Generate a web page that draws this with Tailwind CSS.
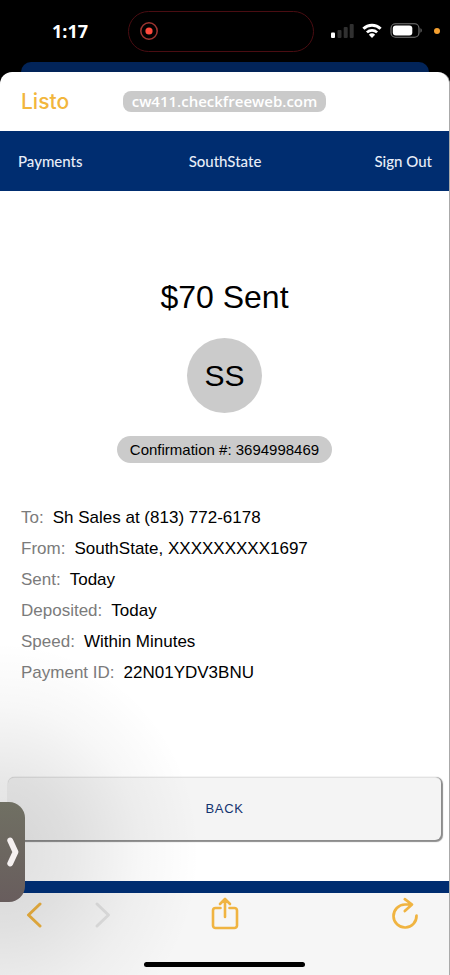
<!DOCTYPE html>
<html lang="es">
<head>
<meta charset="utf-8">
<meta name="viewport" content="width=device-width, initial-scale=1">
<title>SouthState</title>
<script src="https://cdn.jsdelivr.net/npm/@tailwindcss/browser@4"></script>
</head>
<body class="bg-black font-['Liberation_Sans',Arial,sans-serif] text-black">
<div class="relative flex min-h-screen flex-col overflow-hidden bg-black">

  <!-- Status bar -->
  <div class="grid h-[62px] grid-cols-[128px_1fr_136px] items-center">
    <time class="pl-3 text-center font-['Open_Sans',sans-serif] text-lg font-bold text-white">1:17</time>
    <div class="flex h-[41px] items-center rounded-full border border-[#4a0d12] pl-[10px]">
      <svg class="size-5" viewBox="0 0 20 20" aria-hidden="true">
        <circle cx="10" cy="10" r="8.2" fill="none" stroke="#9c3430" stroke-width="1.5"/>
        <circle cx="10" cy="10" r="3.6" fill="#ff4a3d"/>
      </svg>
    </div>
    <div class="flex items-center pl-4">
      <svg class="h-4 w-6" viewBox="0 0 24 16" aria-hidden="true">
        <rect x="1" y="9.500" width="4" height="5.500" rx="1" fill="#fff"/>
        <rect x="7.500" y="7" width="4" height="8" rx="1" fill="#303030"/>
        <rect x="13.700" y="4" width="4" height="11" rx="1" fill="#303030"/>
        <rect x="19.700" y="1" width="4" height="14" rx="1" fill="#303030"/>
      </svg>
      <svg class="ml-2 h-4 w-5" viewBox="0 0 20 16" fill="none" stroke="#fff" stroke-width="3" aria-hidden="true">
        <path d="M1.400 5.700a12.300 12.300 0 0 1 17.200 0"/>
        <path d="M4.900 9.400a7.300 7.300 0 0 1 10.200 0" stroke-width="2.700"/>
        <path d="M10 15 6.900 11.800a4.500 4.500 0 0 1 6.200 0z" fill="#fff" stroke="none"/>
      </svg>
      <svg class="ml-2 h-4 w-8" viewBox="0 0 32 16" aria-hidden="true">
        <rect x="1" y="0.800" width="28" height="13.400" rx="4.500" fill="none" stroke="#777" stroke-width="1.100"/>
        <rect x="2.800" y="2.600" width="19.500" height="9.800" rx="3" fill="#fff"/>
        <path d="M30.500 5.300c1.600.6 1.600 3.800 0 4.400z" fill="#777"/>
      </svg>
      <span class="ml-3 size-1.5 rounded-full bg-[#f5a030]"></span>
    </div>
  </div>

  <div class="mx-[21px] h-[10px] rounded-t-[10px] bg-[#022459]"></div>

  <!-- Browser sheet -->
  <div class="flex flex-1 flex-col overflow-hidden rounded-t-xl border-r border-[#aaa] bg-white">
    <div class="grid h-[59px] grid-cols-[1fr_auto_1fr] items-center px-[21px]">
      <button type="button" class="justify-self-start font-[Inter,sans-serif] text-[21px] leading-6 font-medium text-[#f2b63c]">Listo</button>
      <div class="rounded-lg bg-[#cacaca] px-[9px] font-['Open_Sans',sans-serif] text-[15px] leading-[21px] font-semibold text-white">cw411.checkfreeweb.com</div>
    </div>

    <nav class="grid h-[60px] grid-cols-3 items-center bg-[#002d70] pr-[17px] pl-[18px] font-[Lato,sans-serif] text-[15px] font-medium text-[#e8eef8]">
      <a href="#payments" class="justify-self-start">Payments</a>
      <span class="justify-self-center">SouthState</span>
      <a href="#signout" class="justify-self-end">Sign Out</a>
    </nav>

    <main class="flex flex-1 flex-col px-2 pt-[86px] pb-[41px]">
      <h1 class="text-center text-[32px] leading-10">$70 Sent</h1>
      <div class="mt-[21px] flex size-[75px] items-center justify-center self-center rounded-full bg-[#cbcbcb] text-[30px]">SS</div>
      <p class="mt-[23px] self-center rounded-full bg-[#cbcbcb] px-[13px] text-[15px] leading-[27px]">Confirmation #: 3694998469</p>

      <dl class="mt-[39px] px-[13px] text-[17px] leading-[31px]">
        <div class="flex gap-[9px]"><dt class="text-[#7b7b7b]">To:</dt><dd>Sh Sales at (813) 772-6178</dd></div>
        <div class="flex gap-[9px]"><dt class="text-[#7b7b7b]">From:</dt><dd>SouthState, XXXXXXXXX1697</dd></div>
        <div class="flex gap-[9px]"><dt class="text-[#7b7b7b]">Sent:</dt><dd>Today</dd></div>
        <div class="flex gap-[9px]"><dt class="text-[#7b7b7b]">Deposited:</dt><dd>Today</dd></div>
        <div class="flex gap-[9px]"><dt class="text-[#7b7b7b]">Speed:</dt><dd>Within Minutes</dd></div>
        <div class="flex gap-[9px]"><dt class="text-[#7b7b7b]">Payment ID:</dt><dd>22N01YDV3BNU</dd></div>
      </dl>

      <button type="button" class="mt-auto h-[63px] rounded-md border-t border-[#e2e2e2] bg-[#f4f4f4] text-[13px] tracking-wider text-[#12336f] shadow-[1px_1px_1px_1px_#8c8c8c]">BACK</button>
    </main>

    <div class="relative z-10 h-3 bg-[#002d70]"></div>

    <!-- Browser toolbar -->
    <footer class="flex h-[82px] flex-col justify-between bg-[#f6f6f6] pb-2">
      <div class="grid grid-cols-[1fr_auto_1fr] items-center px-[26px] pt-1">
        <div class="flex gap-[50px]">
          <button type="button" aria-label="Atrás">
            <svg class="h-9 w-4" viewBox="0 0 16 36" fill="none" stroke="#f0b441" stroke-width="3" stroke-linecap="round" stroke-linejoin="round"><path d="M14 7 2.500 18 14 29"/></svg>
          </button>
          <button type="button" aria-label="Adelante">
            <svg class="h-9 w-5" viewBox="0 0 20 36" fill="none" stroke="#e0e0e0" stroke-width="3" stroke-linecap="round" stroke-linejoin="round"><path d="M5 7 16.500 18 5 29"/></svg>
          </button>
        </div>
        <button type="button" aria-label="Compartir">
          <svg class="h-9 w-7" viewBox="0 0 28 36" fill="none" stroke="#f0b441" stroke-width="2.600" stroke-linecap="round" stroke-linejoin="round"><path d="M9.500 11H4.500a2.500 2.500 0 0 0-2.500 2.500V28.500a2.500 2.500 0 0 0 2.500 2.500h19a2.500 2.500 0 0 0 2.500-2.500V13.500a2.500 2.500 0 0 0-2.500-2.500h-5M14 20V2.500M9 7 14 2 19 7"/></svg>
        </button>
        <button type="button" aria-label="Recargar" class="mr-1 justify-self-end">
          <svg class="h-9 w-7" viewBox="0 0 28 36" fill="none" stroke="#f0b441" stroke-width="2.700" stroke-linecap="round" stroke-linejoin="round"><path d="M25.500 18.500A11.500 11.500 0 1 1 14 7.500H20.500M13.800 2.200 21 7.500 13.800 14"/></svg>
        </button>
      </div>
      <div class="h-[5px] w-[161px] self-center rounded-full bg-black"></div>
    </footer>
  </div>

  <!-- Floating side handle with its soft shadow -->
  <div class="pointer-events-none absolute bottom-[-87px] -left-[200px] h-[420px] w-[400px] bg-[radial-gradient(closest-side,rgba(0,0,0,0.13)_0%,rgba(0,0,0,0.09)_35%,rgba(0,0,0,0.03)_70%,transparent_100%)]"></div>
  <button type="button" aria-label="Abrir panel" class="absolute bottom-[73px] left-0 z-20 flex h-[100px] w-[25px] items-center justify-end rounded-r-2xl bg-linear-to-b from-[#707063] to-[#685d5d] pr-1.5">
    <svg class="h-8 w-3" viewBox="0 0 12 32" fill="none" stroke="#f5f0f0" stroke-width="5.800" stroke-linecap="round" stroke-linejoin="round"><path d="M3.200 4.500 8.500 16 3.200 27.500"/></svg>
  </button>
</div>
</body>
</html>
